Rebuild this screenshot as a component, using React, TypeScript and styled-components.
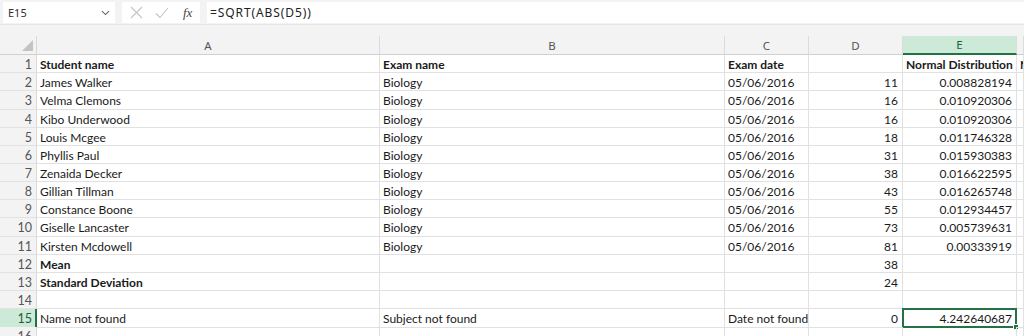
import React from "react";
import styled, { createGlobalStyle, css } from "styled-components";

const GlobalStyle = createGlobalStyle`
  html, body { margin: 0; padding: 0; background: #ffffff; }
  body { font-family: "Lato", "Open Sans", sans-serif; overflow: hidden; }
  * { box-sizing: border-box; }
`;

const COLS = "37px 343px 345px 84px 94px 114px 1fr";

const Page = styled.div`
  width: 1024px;
  height: 336px;
  overflow: hidden;
  background: #ffffff;
`;

const FormulaBar = styled.div`
  display: flex;
  align-items: stretch;
  gap: 7px;
  height: 24px;
  padding: 2px 0 1px 3px;
  background: #f3f3f3;
`;

const NameBox = styled.div`
  width: 112px;
  background: #ffffff;
  display: flex;
  align-items: center;
  justify-content: space-between;
  padding: 0 5px 0 5px;
  font-family: "Noto Sans", sans-serif;
  font-size: 11px;
  color: #333;
`;

const FxBox = styled.div`
  width: 78px;
  background: #ffffff;
  display: flex;
  align-items: center;
  gap: 12px;
  padding-left: 8px;
`;

const FxLabel = styled.span`
  font-family: "Liberation Serif", serif;
  font-style: italic;
  font-size: 13px;
  color: #444;
  margin-left: 2px;
`;

const FormulaInput = styled.div`
  flex: 1;
  background: #ffffff;
  display: flex;
  align-items: center;
  padding-left: 3px;
  font-family: "Noto Sans", sans-serif;
  font-size: 12px;
  letter-spacing: 0.9px;
  color: #222;
`;

const Gap = styled.div`
  height: 12px;
  background: #f3f3f3;
  border-top: 1px solid #e6e6e6;
`;

const Row = styled.div<{ $h?: number }>`
  display: grid;
  grid-template-columns: ${COLS};
  height: ${(p) => p.$h ?? 18}px;
`;

const Corner = styled.div`
  background: #f3f3f3;
  border-right: 1px solid #d9d9d9;
  border-bottom: 1px solid #d0d0d0;
  display: flex;
  align-items: flex-end;
  justify-content: flex-end;
  padding: 0 3px 3px 0;
`;

const ColHead = styled.div<{ $sel?: boolean }>`
  background: #f3f3f3;
  border-right: 1px solid #dcdcdc;
  border-bottom: 1px solid #d0d0d0;
  display: flex;
  align-items: center;
  justify-content: center;
  font-family: "Noto Sans", sans-serif;
  font-size: 11.5px;
  color: #555;
  ${(p) =>
    p.$sel &&
    css`
      background: #cde9d8;
      color: #1e5e38;
      border-bottom: 2px solid #217346;
    `}
`;

const RowHead = styled.div<{ $sel?: boolean }>`
  background: #f3f3f3;
  border-right: 1px solid #d9d9d9;
  border-bottom: 1px solid #e2e2e2;
  display: flex;
  align-items: center;
  justify-content: flex-end;
  padding: 1px 4px 0 0;
  font-family: "Lato", sans-serif;
  font-size: 12.5px;
  color: #555;
  overflow: hidden;
  ${(p) =>
    p.$sel &&
    css`
      background: #cde9d8;
      color: #1e5e38;
      border-right: 2px solid #217346;
      padding-right: 3px;
    `}
`;

const Cell = styled.div<{ $right?: boolean; $bold?: boolean; $sel?: boolean }>`
  position: relative;
  border-right: 1px solid #e1e1e1;
  border-bottom: 1px solid #e1e1e1;
  padding: ${(p) => (p.$right ? "1px 4px 0 3px" : "1px 0 0 3px")};
  font-size: 12px;
  line-height: 17px;
  color: #1a1a1a;
  white-space: nowrap;
  overflow: hidden;
  text-align: ${(p) => (p.$right ? "right" : "left")};
  font-weight: ${(p) => (p.$bold ? 700 : 400)};
  ${(p) =>
    p.$sel &&
    css`
      overflow: visible;
    `}
`;

const SelFrame = styled.div`
  position: absolute;
  left: -1px;
  top: -1px;
  right: -1px;
  bottom: -1px;
  border: 2px solid #217346;
  pointer-events: none;
`;

const Handle = styled.div`
  position: absolute;
  right: -4px;
  bottom: -4px;
  width: 6px;
  height: 6px;
  background: #217346;
  border: 1px solid #ffffff;
`;

const Chevron = () => (
  <svg width="9" height="6" viewBox="0 0 9 6">
    <path d="M1 1.2 L4.5 4.6 L8 1.2" fill="none" stroke="#666" strokeWidth="1.1" />
  </svg>
);

const CrossIcon = () => (
  <svg width="13" height="13" viewBox="0 0 13 13">
    <path d="M1 1 L12 12 M12 1 L1 12" stroke="#c4c4c4" strokeWidth="1.1" fill="none" />
  </svg>
);

const CheckIcon = () => (
  <svg width="14" height="12" viewBox="0 0 14 12">
    <path d="M1 6.5 L5 10.5 L13 1" stroke="#c4c4c4" strokeWidth="1.1" fill="none" />
  </svg>
);

const CornerTriangle = () => (
  <svg width="11" height="11" viewBox="0 0 11 11">
    <path d="M11 0 L11 11 L0 11 Z" fill="#c3c3c3" />
  </svg>
);

type R = [string, string, string, string, string];

const data: R[] = [
  ["Student name", "Exam name", "Exam date", "", "Normal Distribution"],
  ["James Walker", "Biology", "05/06/2016", "11", "0.008828194"],
  ["Velma Clemons", "Biology", "05/06/2016", "16", "0.010920306"],
  ["Kibo Underwood", "Biology", "05/06/2016", "16", "0.010920306"],
  ["Louis Mcgee", "Biology", "05/06/2016", "18", "0.011746328"],
  ["Phyllis Paul", "Biology", "05/06/2016", "31", "0.015930383"],
  ["Zenaida Decker", "Biology", "05/06/2016", "38", "0.016622595"],
  ["Gillian Tillman", "Biology", "05/06/2016", "43", "0.016265748"],
  ["Constance Boone", "Biology", "05/06/2016", "55", "0.012934457"],
  ["Giselle Lancaster", "Biology", "05/06/2016", "73", "0.005739631"],
  ["Kirsten Mcdowell", "Biology", "05/06/2016", "81", "0.00333919"],
  ["Mean", "", "", "38", ""],
  ["Standard Deviation", "", "", "24", ""],
  ["", "", "", "", ""],
  ["Name not found", "Subject not found", "Date not found", "0", "4.242640687"],
  ["", "", "", "", ""],
];

const rowHeight = (n: number) => (n === 3 || n === 10 ? 19 : 18);

export default function App() {
  return (
    <Page>
      <GlobalStyle />
      <FormulaBar>
        <NameBox>
          <span>E15</span>
          <Chevron />
        </NameBox>
        <FxBox>
          <CrossIcon />
          <CheckIcon />
          <FxLabel>fx</FxLabel>
        </FxBox>
        <FormulaInput>=SQRT(ABS(D5))</FormulaInput>
      </FormulaBar>
      <Gap />
      <Row $h={19}>
        <Corner>
          <CornerTriangle />
        </Corner>
        <ColHead>A</ColHead>
        <ColHead>B</ColHead>
        <ColHead>C</ColHead>
        <ColHead>D</ColHead>
        <ColHead $sel>E</ColHead>
        <ColHead />
      </Row>
      {data.map((r, i) => {
        const n = i + 1;
        const isHeader = n === 1;
        const bold = isHeader || n === 12 || n === 13;
        const sel = n === 15;
        return (
          <Row key={n} $h={rowHeight(n)}>
            <RowHead $sel={sel}>{n}</RowHead>
            <Cell $bold={bold}>{r[0]}</Cell>
            <Cell $bold={bold}>{r[1]}</Cell>
            <Cell $bold={bold}>{r[2]}</Cell>
            <Cell $right>{r[3]}</Cell>
            <Cell $right={!isHeader} $bold={isHeader} $sel={sel}>
              {r[4]}
              {sel && (
                <SelFrame>
                  <Handle />
                </SelFrame>
              )}
            </Cell>
            <Cell $bold={isHeader}>{isHeader ? "Normal" : ""}</Cell>
          </Row>
        );
      })}
    </Page>
  );
}
